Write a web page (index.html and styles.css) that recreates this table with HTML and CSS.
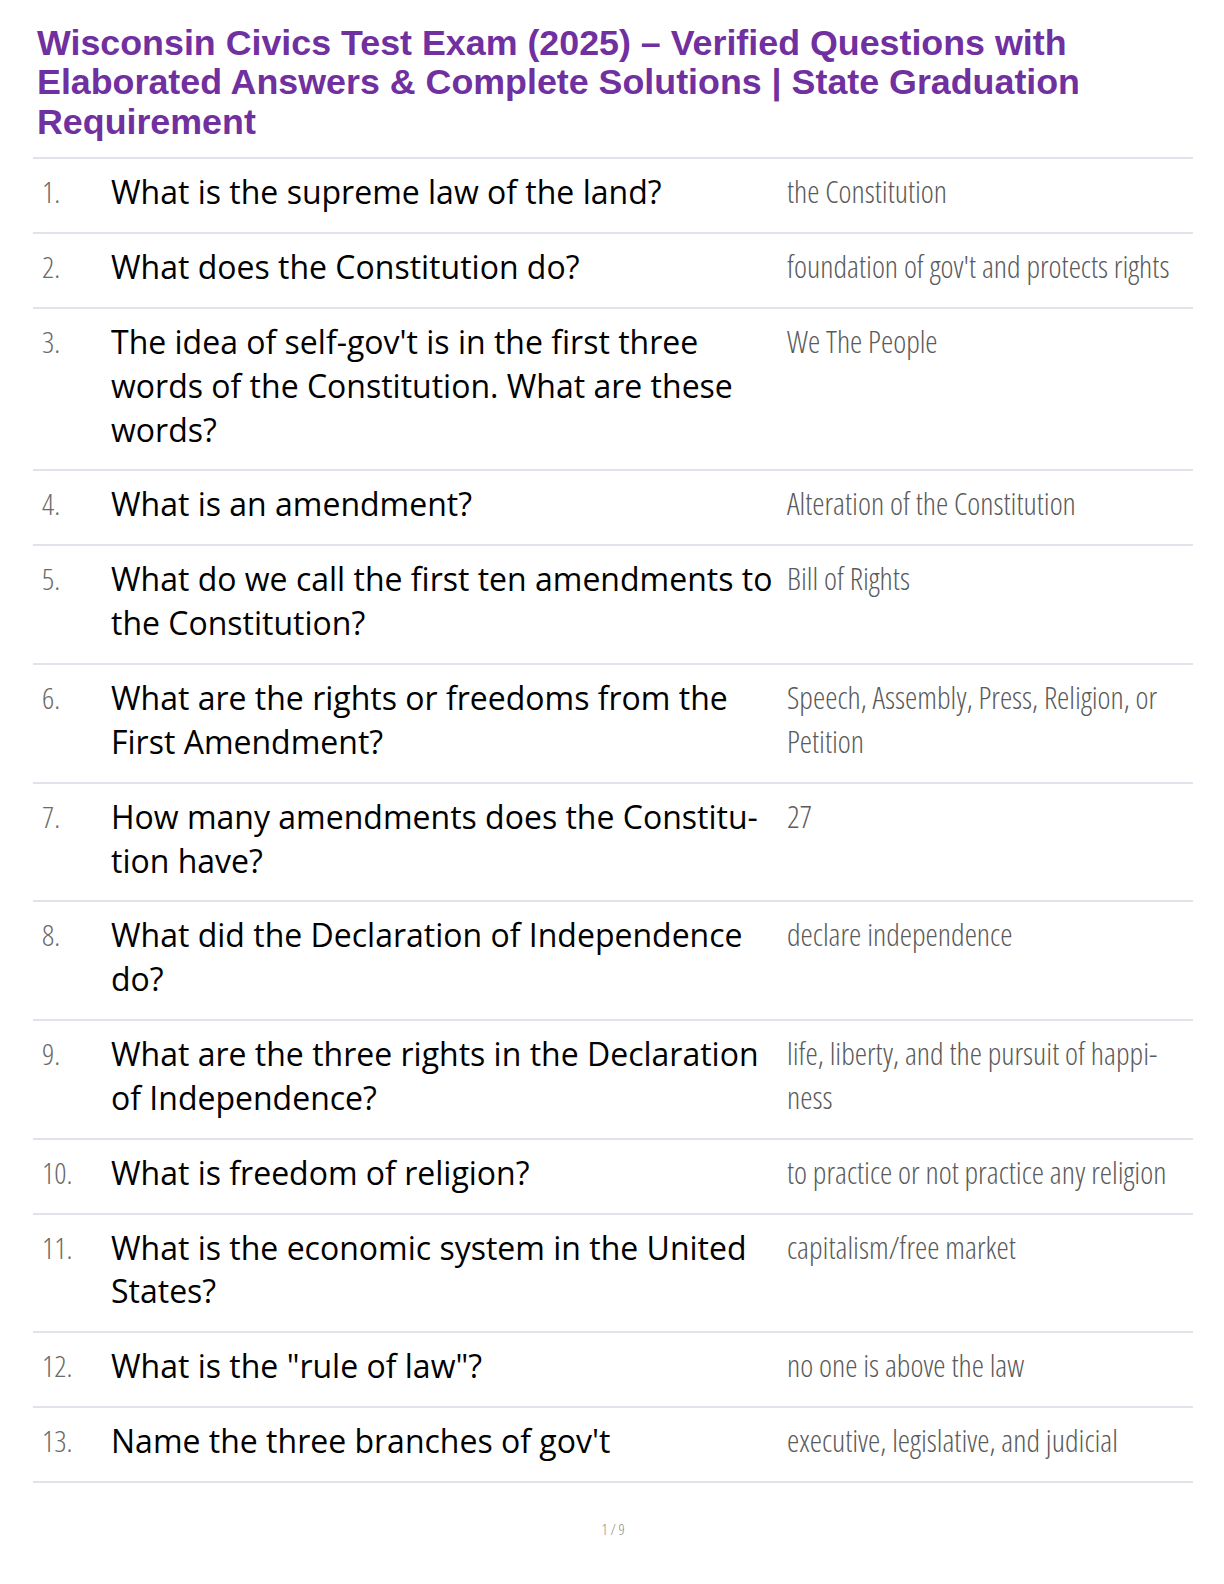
FILE: index.html
```html
<!DOCTYPE html>
<html lang="en">
<head>
<meta charset="utf-8">
<title>Wisconsin Civics Test Exam (2025)</title>
<link rel="stylesheet" href="styles.css">
</head>
<body>
<main class="page">
  <h1 class="title">Wisconsin Civics Test Exam (2025) – Verified Questions with Elaborated Answers &amp; Complete Solutions | State Graduation Requirement</h1>
  <div class="qa">
    <div class="row"><div class="num">1.</div><div class="q">What is the supreme law of the land?</div><div class="a">the Constitution</div></div>
    <div class="row"><div class="num">2.</div><div class="q">What does the Constitution do?</div><div class="a">foundation of gov't and protects rights</div></div>
    <div class="row"><div class="num">3.</div><div class="q">The idea of self-gov't is in the first three words of the Constitution. What are these words?</div><div class="a">We The People</div></div>
    <div class="row"><div class="num">4.</div><div class="q">What is an amendment?</div><div class="a">Alteration of the Constitution</div></div>
    <div class="row"><div class="num">5.</div><div class="q">What do we call the first ten amendments to the Constitution?</div><div class="a">Bill of Rights</div></div>
    <div class="row"><div class="num">6.</div><div class="q">What are the rights or freedoms from the First Amendment?</div><div class="a">Speech, Assembly, Press, Religion, or Petition</div></div>
    <div class="row"><div class="num">7.</div><div class="q">How many amendments does the Constitu&shy;tion have?</div><div class="a">27</div></div>
    <div class="row"><div class="num">8.</div><div class="q">What did the Declaration of Independence do?</div><div class="a">declare independence</div></div>
    <div class="row"><div class="num">9.</div><div class="q">What are the three rights in the Declaration of Independence?</div><div class="a">life, liberty, and the pursuit of happi&shy;ness</div></div>
    <div class="row"><div class="num">10.</div><div class="q">What is freedom of religion?</div><div class="a">to practice or not practice any religion</div></div>
    <div class="row"><div class="num">11.</div><div class="q">What is the economic system in the United States?</div><div class="a">capitalism/free market</div></div>
    <div class="row"><div class="num">12.</div><div class="q">What is the "rule of law"?</div><div class="a">no one is above the law</div></div>
    <div class="row"><div class="num">13.</div><div class="q">Name the three branches of gov't</div><div class="a">executive, legislative, and judicial</div></div>
  </div>
  <footer class="pager">1 / 9</footer>
</main>
</body>
</html>
```
FILE: styles.css
```css
html, body {
  margin: 0;
  padding: 0;
  background: #ffffff;
}

.page {
  width: 1160px;
  margin-left: 33px;
  padding-top: 24px;
}

.title {
  margin: 0 0 15px 4px;
  font-family: "Liberation Sans", Arial, sans-serif;
  font-weight: 700;
  font-size: 35.8px;
  line-height: 39.4px;
  color: #7030a0;
  width: 1100px;
}

.qa {
  border-top: 2px solid #e2e2ea;
}

.row {
  display: grid;
  grid-template-columns: 78px 676px 1fr;
  padding: 11px 0 18px 0;
  border-bottom: 2px solid #e2e2ea;
  line-height: 43.85px;
}

.num {
  padding-left: 9px;
  font-family: "Open Sans", sans-serif;
  font-weight: 300;
  font-stretch: 75%;
  font-size: 30px;
  color: #6a6a6a;
}

.q {
  font-family: "Open Sans", sans-serif;
  font-size: 32px;
  color: #000000;
}

.a {
  font-family: "Open Sans", sans-serif;
  font-weight: 300;
  font-stretch: 75%;
  font-size: 31px;
  color: #5a5a5a;
  hyphens: manual;
}

.pager {
  margin-top: 36px;
  text-align: center;
  font-family: "Open Sans", sans-serif;
  font-weight: 300;
  font-stretch: 75%;
  font-size: 15px;
  color: #888888;
}
```
